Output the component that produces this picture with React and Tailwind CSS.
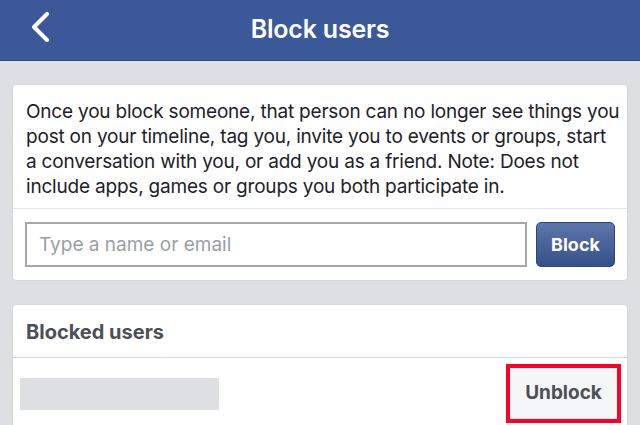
import { useState } from 'react'

const notice = [
  'Once you block someone, that person can no longer see things you',
  'post on your timeline, tag you, invite you to events or groups, start',
  'a conversation with you, or add you as a friend. Note: Does not',
  'include apps, games or groups you both participate in.',
]

export default function App() {
  const [query, setQuery] = useState('')

  return (
    <div
      className="w-[640px] h-[425px] overflow-hidden bg-[#dddfe2]"
      style={{ fontFamily: 'Inter, "Noto Sans", sans-serif' }}
    >
      {/* Top bar */}
      <header className="relative h-[61px] bg-[#3b5998] border-b border-[#2f4a80] flex items-center justify-center">
        <button className="absolute left-[28px] top-[12px] text-white">
          <svg width="24" height="30" viewBox="0 0 24 30" fill="none">
            <path d="M19 2 L6 15 L19 28" stroke="white" strokeWidth="4" strokeLinecap="round" strokeLinejoin="round" />
          </svg>
        </button>
        <h1 className="text-white text-[25px] font-semibold tracking-[-0.2px]">Block users</h1>
      </header>

      {/* Explanation + search */}
      <section className="mx-3 mt-[23px] bg-white rounded-[4px] border border-[#d3d6db]">
        <p className="px-[13px] pt-[14px] pb-[9px] text-[19px] leading-[25px] text-[#1d2129] tracking-[-0.2px]">
          {notice.map((line) => (
            <span key={line} className="block whitespace-nowrap">
              {line}
            </span>
          ))}
        </p>
        <div className="border-t border-[#e5e6e9] flex items-center gap-[9px] pl-[12px] pr-[12px] pt-[13px] pb-[13px]">
          <input
            value={query}
            onChange={(e) => setQuery(e.target.value)}
            placeholder="Type a name or email"
            className="flex-1 h-[45px] border-2 border-[#a5a7aa] px-[12px] text-[19px] text-[#1d2129] placeholder-[#9a9ea6] outline-none"
          />
          <button className="w-[79px] h-[45px] rounded-[5px] border border-[#2c4479] bg-gradient-to-b from-[#5e77aa] to-[#354f8a] text-white text-[18px] font-bold">
            Block
          </button>
        </div>
      </section>

      {/* Blocked users list */}
      <section className="mx-3 mt-[23px] bg-white rounded-t-[4px] border border-[#d3d6db]">
        <div className="h-[53px] flex items-center px-[13px] pt-[2px] border-b border-[#d3d6db]">
          <h2 className="text-[20px] font-bold text-[#4b4f56]">Blocked users</h2>
        </div>
        <div className="flex items-center justify-between pl-[7px] pr-[6px] pt-[6px] pb-[20px]">
          <div className="w-[199px] h-[32px] bg-[#dddfe2]" />
          <div className="border-4 border-[#ff0022]">
            <button className="w-[107px] h-[51px] bg-[#f5f6f7] rounded-[3px] text-[19px] font-bold text-[#4b4f56]">
              Unblock
            </button>
          </div>
        </div>
      </section>
    </div>
  )
}
